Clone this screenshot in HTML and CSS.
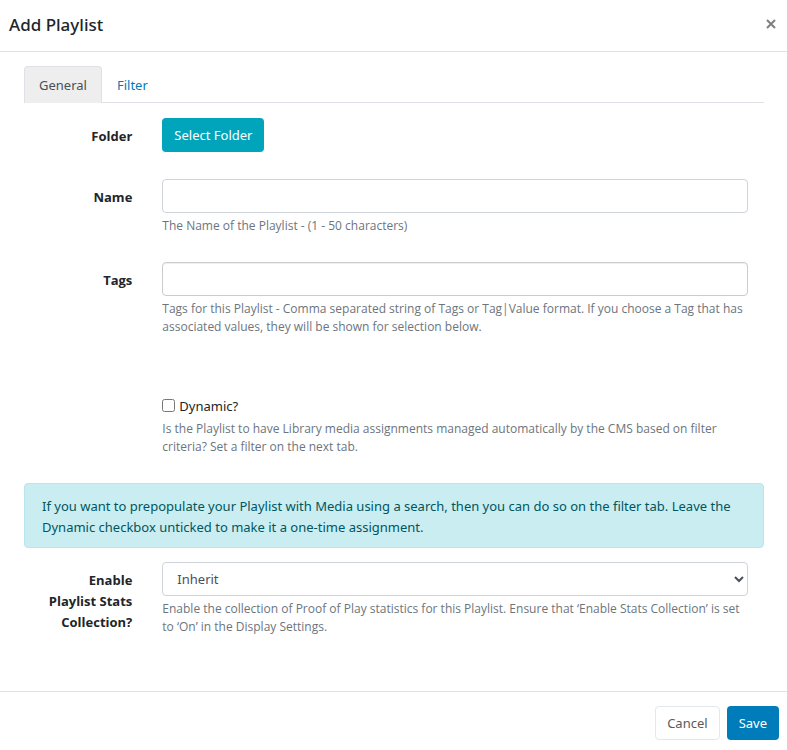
FILE: index.html
```html
<!DOCTYPE html>
<html lang="en">
<head>
    <meta charset="UTF-8">
    <meta name="viewport" content="width=device-width, initial-scale=1.0">
    <title>Add Playlist</title>
    <link rel="stylesheet" href="styles.css">
</head>
<body>
    <form class="modal">
        <header class="modal-header">
            <h1 class="modal-title">Add Playlist</h1>
            <button type="button" class="close" aria-label="Close">
                <svg width="10" height="10" viewBox="0 0 10 10" aria-hidden="true">
                    <path d="M1 1 L9 9 M9 1 L1 9" stroke="currentColor" stroke-width="2" fill="none"/>
                </svg>
            </button>
        </header>

        <main class="modal-body">
            <nav class="tabs">
                <a href="#general" class="tab active">General</a>
                <a href="#filter" class="tab">Filter</a>
            </nav>

            <div class="form-group">
                <label class="form-label" for="folder">Folder</label>
                <div class="form-field">
                    <button type="button" class="btn btn-info" id="folder">Select Folder</button>
                </div>
            </div>

            <div class="form-group">
                <label class="form-label" for="name">Name</label>
                <div class="form-field">
                    <input type="text" class="form-control" id="name" maxlength="50">
                    <small class="help">The Name of the Playlist - (1 - 50 characters)</small>
                </div>
            </div>

            <div class="form-group">
                <label class="form-label" for="tags">Tags</label>
                <div class="form-field">
                    <input type="text" class="form-control tags-input" id="tags">
                    <small class="help">Tags for this Playlist - Comma separated string of Tags or Tag|Value format. If you choose a Tag that has associated values, they will be shown for selection below.</small>
                </div>
            </div>

            <div class="form-group dynamic-group">
                <div class="form-field">
                    <div class="check">
                        <input type="checkbox" id="dynamic">
                        <label for="dynamic">Dynamic?</label>
                    </div>
                    <small class="help">Is the Playlist to have Library media assignments managed automatically by the CMS based on filter criteria? Set a filter on the next tab.</small>
                </div>
            </div>

            <div class="alert">If you want to prepopulate your Playlist with Media using a search, then you can do so on the filter tab. Leave the Dynamic checkbox unticked to make it a one-time assignment.</div>

            <div class="form-group">
                <label class="form-label" for="stats">Enable Playlist Stats Collection?</label>
                <div class="form-field">
                    <select class="form-control" id="stats">
                        <option>Inherit</option>
                        <option>On</option>
                        <option>Off</option>
                    </select>
                    <small class="help">Enable the collection of Proof of Play statistics for this Playlist. Ensure that ‘Enable Stats Collection’ is set to ‘On’ in the Display Settings.</small>
                </div>
            </div>
        </main>

        <footer class="modal-footer">
            <button type="button" class="btn btn-white">Cancel</button>
            <button type="submit" class="btn btn-primary">Save</button>
        </footer>
    </form>
</body>
</html>
```
FILE: styles.css
```css
* {
    box-sizing: border-box;
}

body {
    margin: 0;
    font-family: "Segoe UI", "Noto Sans", "Open Sans", sans-serif;
    font-size: 13px;
    line-height: 21px;
    color: #212529;
    background: #fff;
}

.modal-header {
    display: flex;
    align-items: center;
    justify-content: space-between;
    padding: 12px 9px 13px;
    border-bottom: 1px solid #dee2e6;
}

.modal-title {
    margin: 0;
    font-size: 17px;
    font-weight: 500;
    line-height: 26px;
}

.close {
    display: flex;
    padding: 0 2px 2px;
    border: 0;
    background: none;
    color: #7f7f7f;
    cursor: pointer;
}

.modal-body {
    padding: 14px 23px 28px 24px;
}

.tabs {
    display: flex;
    margin-bottom: 15px;
    border-bottom: 1px solid #dee2e6;
}

.tab {
    margin-bottom: -1px;
    padding: 8px 14px 7px;
    border: 1px solid transparent;
    border-bottom: 0;
    border-radius: 4px 4px 0 0;
    color: #007cba;
    text-decoration: none;
}

.tab.active {
    border-color: #dee2e6;
    background: #eee;
    color: #495057;
}

.form-group {
    display: grid;
    grid-template-columns: 1fr 5fr;
    margin-bottom: 27px;
}

.form-label {
    padding: 8px 15px 0;
    font-family: "Segoe UI", "Open Sans", sans-serif;
    font-weight: 700;
    text-align: right;
}

.form-field {
    grid-column: 2;
    padding: 0 16px 0 15px;
}

.form-control {
    display: block;
    width: 100%;
    height: 34px;
    padding: 6px 10px;
    border: 1px solid #ced4da;
    border-radius: 4px;
    background: #fff;
    color: #495057;
    font: inherit;
}

.tags-input {
    border-color: #ccc;
    box-shadow: inset 0 1px 1px rgba(0, 0, 0, 0.075);
}

.help {
    display: block;
    margin-top: 4px;
    font-family: "Segoe UI", "Open Sans", sans-serif;
    font-size: 12px;
    line-height: 18px;
    color: #6c757d;
}

.dynamic-group {
    margin-top: 60px;
}

.check {
    display: flex;
    align-items: center;
    gap: 4px;
}

.check input {
    margin: 0 0 2px;
}

.dynamic-group .help {
    margin-top: 3px;
}

.alert {
    margin-bottom: 14px;
    padding: 12px 17px 9px;
    border: 1px solid #b8e6ec;
    border-radius: 4px;
    background: #caedf2;
    color: #005660;
}

.btn {
    height: 34px;
    padding: 0 11px;
    border: 1px solid transparent;
    border-radius: 4px;
    color: #fff;
    font: inherit;
    cursor: pointer;
}

.btn-info {
    background: #00a5bb;
}

.btn-white {
    border-color: #e2e8ec;
    background: #fff;
    color: #5a5a5a;
}

.btn-primary {
    background: #007cba;
}

.modal-footer {
    display: flex;
    justify-content: flex-end;
    gap: 7px;
    padding: 14px 8px 10px;
    border-top: 1px solid #dee2e6;
}
```
